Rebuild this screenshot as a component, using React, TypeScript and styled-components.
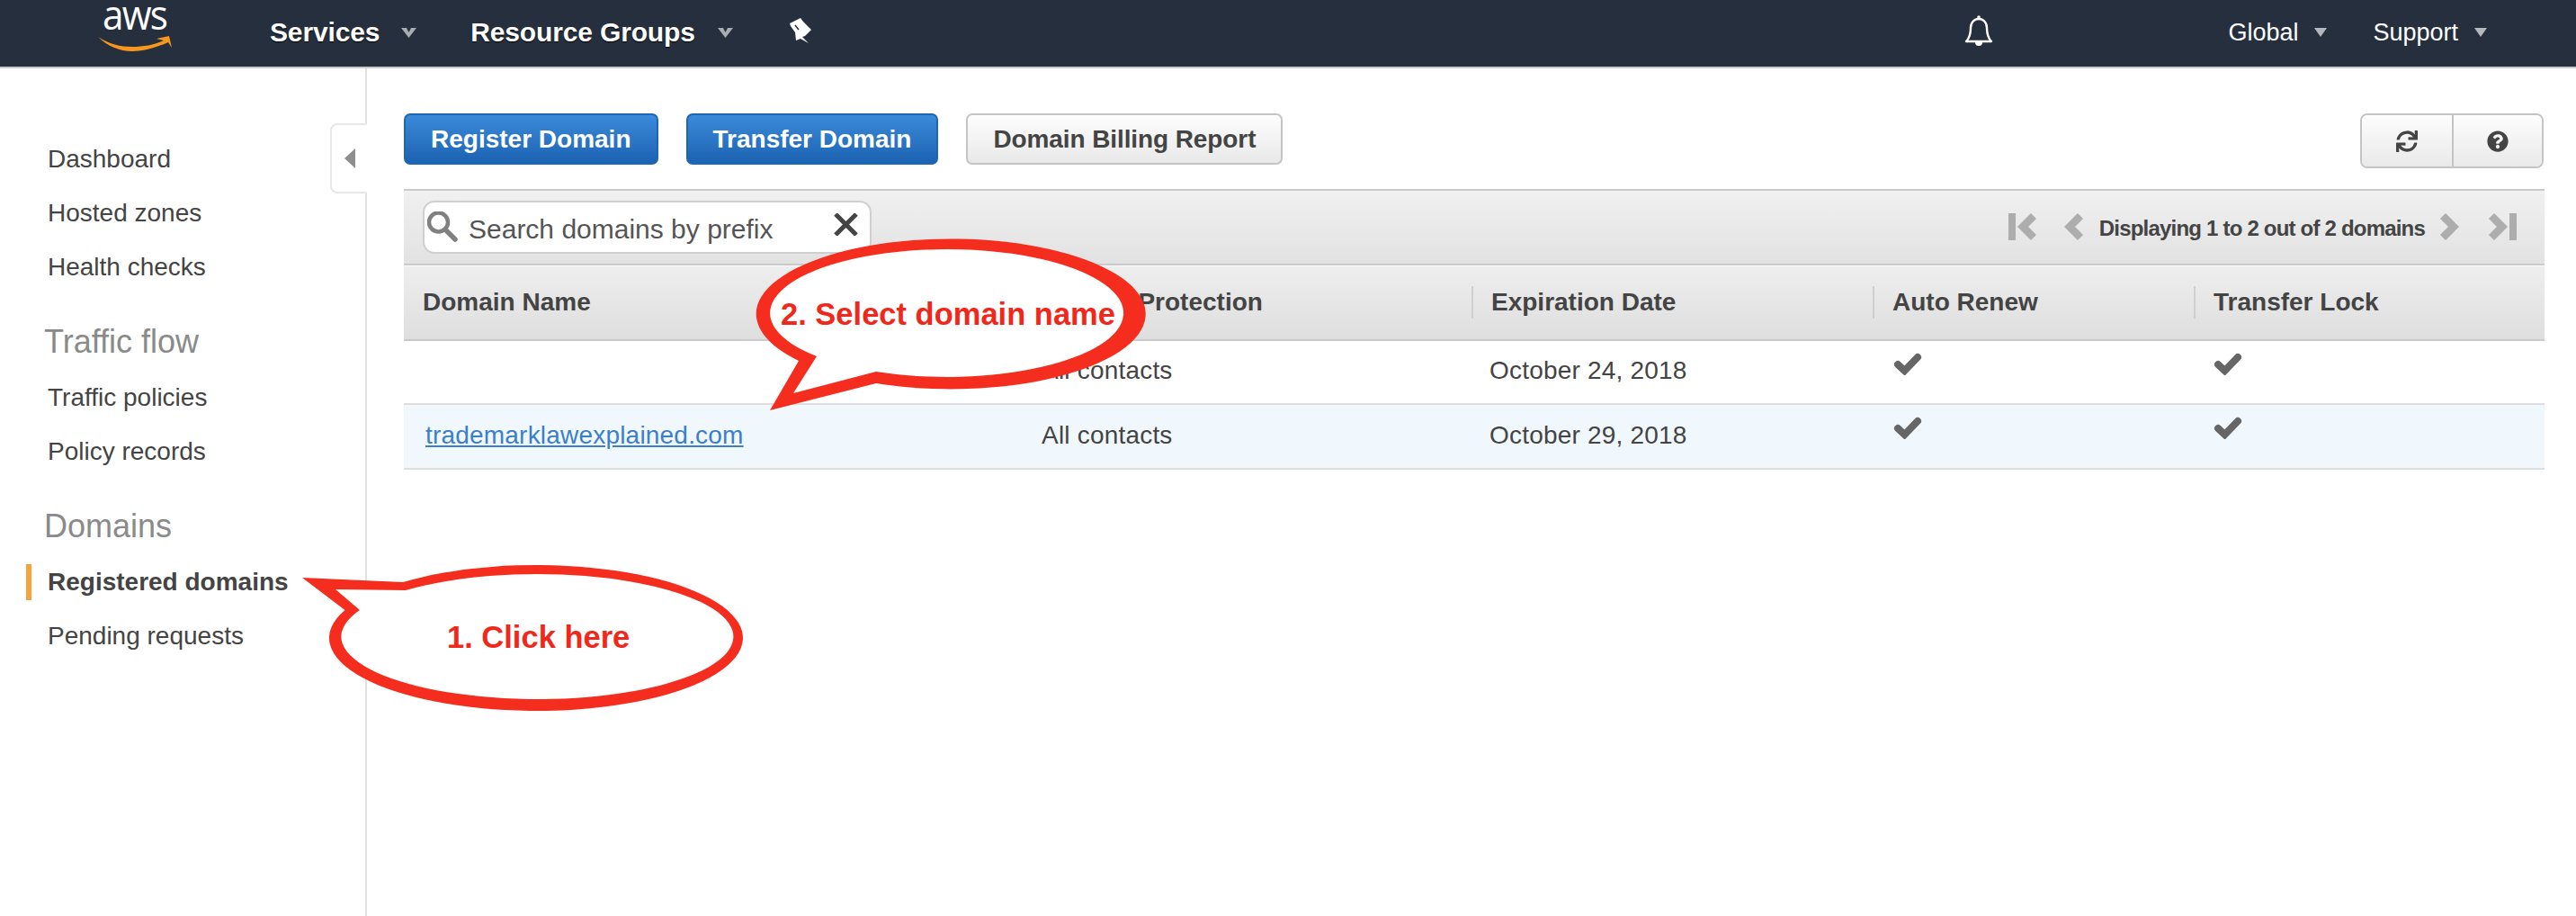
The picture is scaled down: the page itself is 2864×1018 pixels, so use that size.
import React from 'react';
import styled, { createGlobalStyle } from 'styled-components';
import { FaQuestionCircle, FaSync } from 'react-icons/fa';

const GlobalStyle = createGlobalStyle`
	html, body {
		margin: 0;
		padding: 0;
		background: #fff;
		font-family: 'Liberation Sans', Arial, sans-serif;
		color: #444;
	}
	* {
		box-sizing: border-box;
	}
`;

const Page = styled.div`
	position: relative;
	width: 2864px;
	height: 1018px;
	overflow: hidden;
	display: flex;
	flex-direction: column;
`;

/* top bar */
const TopBar = styled.header`
	flex: none;
	height: 76px;
	display: flex;
	align-items: center;
	padding: 0 99px 2px 109px;
	background: #252f3e;
	border-bottom: 2px solid #c9c9c9;
	color: #fff;
`;

const Logo = styled.div`
	width: 82px;
	height: 50px;
	margin-top: -2px;
	position: relative;
	display: flex;
	flex-direction: column;
	align-items: center;
`;

const LogoWord = styled.span`
	margin-top: -10px;
	font-family: 'Open Sans', sans-serif;
	font-size: 46px;
	font-weight: 400;
	line-height: 30px;
	letter-spacing: -2px;
	transform: scaleX(0.92);
	color: #fff;
`;

const LogoSmile = styled.svg`
	position: absolute;
	left: 0;
	bottom: 3px;
`;

const MainMenu = styled.span<{ $gap: number }>`
	font-size: 30px;
	font-weight: 700;
	letter-spacing: -0.15px;
	margin-left: ${(p) => p.$gap}px;
	text-shadow: 0 1px 1px #000;
`;

const SideMenu = styled.span<{ $gap: number }>`
	font-size: 27px;
	margin-left: ${(p) => p.$gap}px;
`;

const CaretIcon = styled.svg<{ $gap: number }>`
	margin-left: ${(p) => p.$gap}px;
	flex: none;
`;

const PinIcon = styled.svg`
	margin-left: 63px;
	margin-top: -4px;
	flex: none;
`;

const BellIcon = styled.svg`
	margin-left: auto;
	margin-top: -4px;
	flex: none;
`;

/* body */
const Body = styled.div`
	flex: 1;
	display: flex;
	min-height: 0;
`;

const Sidebar = styled.nav`
	position: relative;
	flex: none;
	width: 408px;
	padding-top: 71px;
	border-right: 2px solid #e1e1e1;
`;

const CollapseTab = styled.div`
	position: absolute;
	top: 61px;
	right: -2px;
	width: 41px;
	height: 78px;
	display: flex;
	align-items: center;
	justify-content: center;
	background: #fff;
	border: 2px solid #e8e8e8;
	border-right: none;
	border-radius: 8px 0 0 8px;
`;

const NavHeading = styled.div`
	height: 85px;
	padding: 27px 0 0 49px;
	font-size: 36px;
	line-height: 51px;
	color: #8a8a8a;
`;

const NavItem = styled.div<{ $active?: boolean }>`
	position: relative;
	height: 60px;
	padding-left: 53px;
	font-size: 28px;
	line-height: 60px;
	font-weight: ${(p) => (p.$active ? 700 : 400)};
	color: #444;

	${(p) =>
		p.$active &&
		`&::before {
			content: '';
			position: absolute;
			left: 29px;
			top: 10px;
			width: 6px;
			height: 40px;
			background: #f7a23b;
		}`}
`;

const Main = styled.main`
	flex: 1;
	min-width: 0;
	padding: 50px 35px 0 41px;
`;

const ButtonRow = styled.div`
	display: flex;
	align-items: flex-start;
	gap: 31px;
	height: 84px;
`;

const ActionButton = styled.button<{ $primary?: boolean }>`
	height: 57px;
	padding: 0 28px;
	font-family: inherit;
	font-size: 28px;
	font-weight: 700;
	letter-spacing: ${(p) => (p.$primary ? 0 : -0.1)}px;
	border-radius: 7px;
	border: 2px solid ${(p) => (p.$primary ? '#1d66b4' : '#c4c4c4')};
	color: ${(p) => (p.$primary ? '#fff' : '#444')};
	background: ${(p) =>
		p.$primary
			? 'linear-gradient(to bottom, #3a8ad9, #1c63b2)'
			: 'linear-gradient(to bottom, #fdfdfd, #e9e9e9)'};
`;

const IconGroup = styled.div`
	margin-left: auto;
	margin-right: 1px;
	width: 204px;
	height: 61px;
	display: grid;
	grid-template-columns: 1fr 1fr;
	border: 2px solid #c4c4c4;
	border-radius: 8px;
	overflow: hidden;
`;

const IconCell = styled.div`
	display: flex;
	align-items: center;
	justify-content: center;
	font-size: 24px;
	color: #444;
	background: linear-gradient(to bottom, #fdfdfd, #e9e9e9);

	& + & {
		border-left: 2px solid #c4c4c4;
	}
`;

const Toolbar = styled.div`
	height: 85px;
	display: flex;
	align-items: center;
	justify-content: space-between;
	padding: 0 31px 0 21px;
	background: linear-gradient(to bottom, #f0f0f0, #e2e2e2);
	border-top: 2px solid #cacaca;
	border-bottom: 2px solid #cacaca;
`;

const SearchBox = styled.div`
	width: 499px;
	height: 59px;
	display: flex;
	align-items: center;
	padding: 0 13px 0 3px;
	background: #fff;
	border: 2px solid #cfcfcf;
	border-radius: 13px;
`;

const SearchLabel = styled.span`
	flex: 1;
	margin: 4px 0 0 10px;
	font-size: 30px;
	color: #555;
`;

const ClearIcon = styled.svg`
	flex: none;
	margin-top: -7px;
`;

const Pager = styled.div`
	display: flex;
	align-items: center;
	margin-top: 3px;
`;

const PagerText = styled.span`
	margin: 0 16px 0 17px;
	font-size: 24px;
	font-weight: 700;
	letter-spacing: -0.8px;
	color: #444;
`;

const PagerIcon = styled.svg<{ $gap?: number; $flip?: boolean }>`
	flex: none;
	margin-left: ${(p) => p.$gap ?? 0}px;
	margin-top: -5px;
	transform: ${(p) => (p.$flip ? 'scaleX(-1)' : 'none')};
`;

const Table = styled.div`
	margin-top: 1px;
	display: grid;
	grid-template-columns: 687px 500px 446px 357px 390px;
`;

const HeaderCell = styled.div<{ $divider?: boolean; $pad?: number }>`
	position: relative;
	height: 83px;
	padding-left: ${(p) => p.$pad ?? 22}px;
	font-size: 28px;
	font-weight: 700;
	line-height: 80px;
	color: #444;
	background: linear-gradient(to bottom, #eeeeee, #dedede);
	border-bottom: 2px solid #cacaca;

	${(p) =>
		p.$divider &&
		`&::before {
			content: '';
			position: absolute;
			left: 0;
			top: 22px;
			width: 2px;
			height: 36px;
			background: #cfcfcf;
		}`}
`;

const Cell = styled.div<{ $selected?: boolean; $pad?: number }>`
	height: ${(p) => (p.$selected ? 72 : 71)}px;
	padding-left: ${(p) => p.$pad ?? 22}px;
	font-size: 28px;
	line-height: ${(p) => (p.$selected ? 68 : 66)}px;
	letter-spacing: 0.2px;
	color: #444;
	background: ${(p) => (p.$selected ? '#f0f8fe' : '#fff')};
	border-bottom: 2px solid #dedee0;
`;

const DomainLink = styled.a`
	color: #3b7fc9;
	text-decoration: underline;
`;

const CheckMark = styled.svg`
	display: block;
	margin-top: 13px;
`;

/* callouts lying over the page */
const Callout = styled.div<{ $x: number; $y: number; $w: number; $h: number }>`
	position: absolute;
	left: ${(p) => p.$x}px;
	top: ${(p) => p.$y}px;
	width: ${(p) => p.$w}px;
	height: ${(p) => p.$h}px;
`;

const CalloutShape = styled.svg`
	position: absolute;
	inset: 0;
`;

const CalloutText = styled.span<{ $left: number; $top: number }>`
	position: absolute;
	left: ${(p) => p.$left}px;
	top: ${(p) => p.$top}px;
	font-size: 34.5px;
	font-weight: 700;
	line-height: 40px;
	white-space: nowrap;
	color: #f0281c;
`;

const NavCaret = ({ gap }: { gap: number }) => (
	<CaretIcon $gap={gap} width="17" height="11" viewBox="0 0 17 11">
		<path d="M0 0h6l2.5 5L11 0h6L8.5 11z" fill="#a9adb3" />
	</CaretIcon>
);

const SmallCaret = ({ gap }: { gap: number }) => (
	<CaretIcon $gap={gap} width="14" height="10" viewBox="0 0 14 10">
		<path d="M0 0h14L7 10z" fill="#b4b8bd" />
	</CaretIcon>
);

const Chevron = ({ gap, flip }: { gap?: number; flip?: boolean }) => (
	<PagerIcon $gap={gap} $flip={flip} width="22" height="30" viewBox="0 0 22 30">
		<path d="M18 3L6 15l12 12" fill="none" stroke="#adadad" strokeWidth="8.5" />
	</PagerIcon>
);

const EndChevron = ({ gap, flip }: { gap?: number; flip?: boolean }) => (
	<PagerIcon $gap={gap} $flip={flip} width="32" height="30" viewBox="0 0 32 30">
		<rect x="0" y="0" width="8" height="30" fill="#adadad" />
		<path d="M28 3L16 15l12 12" fill="none" stroke="#adadad" strokeWidth="8.5" />
	</PagerIcon>
);

const Tick = () => (
	<CheckMark width="32" height="25" viewBox="0 0 32 25">
		<path d="M5 13l7.5 7L27 5" fill="none" stroke="#666" strokeWidth="8" strokeLinecap="round" />
	</CheckMark>
);

export default function App() {
	return (
		<Page>
			<GlobalStyle />
			<TopBar>
				<Logo>
					<LogoWord>aws</LogoWord>
					<LogoSmile width="84" height="17" viewBox="0 0 84 17">
						<path d="M0 1c12 8 25 11 38 11 12 0 24-2 35-7l-8-2 14-3 3 13-4-6C64 13 50 17 38 17 24 17 10 11 0 1z" fill="#f7981d" />
					</LogoSmile>
				</Logo>
				<MainMenu $gap={109}>Services</MainMenu>
				<NavCaret gap={24} />
				<MainMenu $gap={60}>Resource Groups</MainMenu>
				<NavCaret gap={25} />
				<PinIcon width="25" height="28" viewBox="0 0 25 28">
					<path d="M0 6L12 0l3 4 9 9-7 7-3 1 7 7-9-5-5 2-1-9-5-7z" fill="#fff" />
					<path d="M6 8l4 5" stroke="#252f3e" strokeWidth="1.5" />
				</PinIcon>
				<BellIcon width="32" height="35" viewBox="0 0 32 35">
					<circle cx="16" cy="2" r="1.8" fill="#fff" />
					<path
						d="M2 29C6 25 7 19 7 14 7 8 11 4 16 4s9 4 9 10c0 5 1 11 5 15z"
						fill="none"
						stroke="#fff"
						strokeWidth="2.4"
						strokeLinejoin="round"
					/>
					<path d="M12 30a4 4 0 0 0 8 0z" fill="#fff" />
				</BellIcon>
				<SideMenu $gap={261}>Global</SideMenu>
				<SmallCaret gap={18} />
				<SideMenu $gap={51}>Support</SideMenu>
				<SmallCaret gap={18} />
			</TopBar>
			<Body>
				<Sidebar>
					<CollapseTab>
						<svg width="12" height="22" viewBox="0 0 12 22">
							<path d="M12 0v22L0 11z" fill="#8d8d8d" />
						</svg>
					</CollapseTab>
					<NavItem>Dashboard</NavItem>
					<NavItem>Hosted zones</NavItem>
					<NavItem>Health checks</NavItem>
					<NavHeading>Traffic flow</NavHeading>
					<NavItem>Traffic policies</NavItem>
					<NavItem>Policy records</NavItem>
					<NavHeading>Domains</NavHeading>
					<NavItem $active>Registered domains</NavItem>
					<NavItem>Pending requests</NavItem>
				</Sidebar>
				<Main>
					<ButtonRow>
						<ActionButton $primary>Register Domain</ActionButton>
						<ActionButton $primary>Transfer Domain</ActionButton>
						<ActionButton>Domain Billing Report</ActionButton>
						<IconGroup>
							<IconCell>
								<FaSync />
							</IconCell>
							<IconCell>
								<FaQuestionCircle />
							</IconCell>
						</IconGroup>
					</ButtonRow>
					<Toolbar>
						<SearchBox>
							<svg width="36" height="36" viewBox="0 0 36 36">
								<circle cx="12.5" cy="12" r="10.5" fill="none" stroke="#808080" strokeWidth="4.5" />
								<path d="M20 20l11 11" stroke="#808080" strokeWidth="5.5" strokeLinecap="round" />
							</svg>
							<SearchLabel>Search domains by prefix</SearchLabel>
							<ClearIcon width="27" height="25" viewBox="0 0 27 25">
								<path d="M2 1l23 23M25 1L2 24" stroke="#444" strokeWidth="5" />
							</ClearIcon>
						</SearchBox>
						<Pager>
							<EndChevron />
							<Chevron gap={30} />
							<PagerText>Displaying 1 to 2 out of 2 domains</PagerText>
							<Chevron flip />
							<EndChevron gap={32} flip />
						</Pager>
					</Toolbar>
					<Table>
						<HeaderCell $pad={21}>Domain Name</HeaderCell>
						<HeaderCell $divider>Privacy Protection</HeaderCell>
						<HeaderCell $divider>Expiration Date</HeaderCell>
						<HeaderCell $divider>Auto Renew</HeaderCell>
						<HeaderCell $divider>Transfer Lock</HeaderCell>

						<Cell />
						<Cell>All contacts</Cell>
						<Cell $pad={20}>October 24, 2018</Cell>
						<Cell $pad={23}>
							<Tick />
						</Cell>
						<Cell>
							<Tick />
						</Cell>

						<Cell $selected $pad={24}>
							<DomainLink>trademarklawexplained.com</DomainLink>
						</Cell>
						<Cell $selected>All contacts</Cell>
						<Cell $selected $pad={20}>
							October 29, 2018
						</Cell>
						<Cell $selected $pad={23}>
							<Tick />
						</Cell>
						<Cell $selected>
							<Tick />
						</Cell>
					</Table>
				</Main>
			</Body>

			<Callout $x={830} $y={255} $w={460} $h={210}>
				<CalloutShape width="460" height="210" viewBox="830 255 460 210">
					<path d="M888 401L856 456 974 426A216.5 83.5 0 1 0 888 401Z" fill="#f52d1e" />
					<path d="M908 396L882 437 974 413A196.5 71 0 1 0 908 396Z" fill="#fff" />
				</CalloutShape>
				<CalloutText $left={38} $top={74}>
					2. Select domain name
				</CalloutText>
			</Callout>

			<Callout $x={330} $y={620} $w={510} $h={180}>
				<CalloutShape width="510" height="180" viewBox="330 620 510 180">
					<path d="M448 647L336 642 383.5 678A230 81 0 1 0 448 647Z" fill="#f52d1e" />
					<path d="M451 656L373 655 400 678A218 69.5 0 1 0 451 656Z" fill="#fff" />
				</CalloutShape>
				<CalloutText $left={167} $top={68}>
					1. Click here
				</CalloutText>
			</Callout>
		</Page>
	);
}
